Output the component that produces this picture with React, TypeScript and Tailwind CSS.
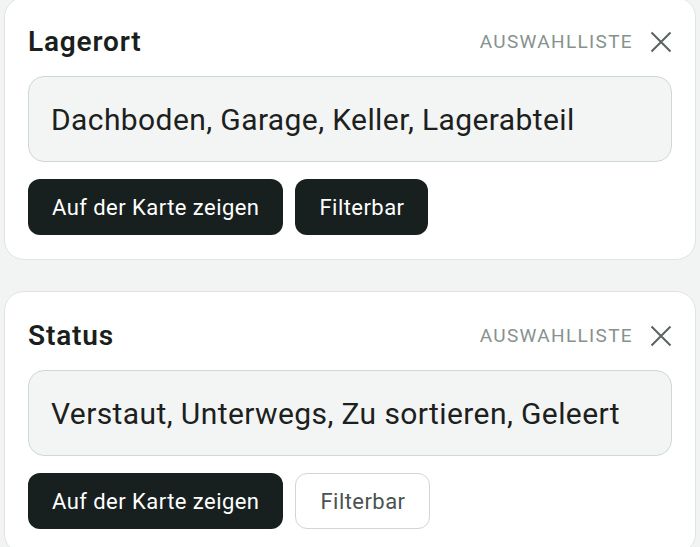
type Field = {
  title: string;
  values: string[];
  filterable: boolean;
};

const FIELDS: Field[] = [
  {
    title: "Lagerort",
    values: ["Dachboden", "Garage", "Keller", "Lagerabteil"],
    filterable: true,
  },
  {
    title: "Status",
    values: ["Verstaut", "Unterwegs", "Zu sortieren", "Geleert"],
    filterable: false,
  },
];

function CloseIcon() {
  return (
    <svg
      width="22"
      height="22"
      viewBox="0 0 22 22"
      fill="none"
      stroke="currentColor"
      strokeWidth="2"
      className="text-[#5a6360]"
    >
      <path d="M1.5 1.5l19 19M20.5 1.5l-19 19" />
    </svg>
  );
}

function FieldCard({ field }: { field: Field }) {
  return (
    <div className="rounded-[20px] border border-[#dfe4e2] bg-white px-[23px] pt-[26px] pb-6">
      <div className="flex h-9 items-center justify-between">
        <h2 className="text-[28px] leading-9 font-semibold tracking-[0.03em] text-[#1a1f1e]">
          {field.title}
        </h2>
        <div className="flex items-center gap-[17px]">
          <span className="text-[19px] tracking-[0.07em] text-[#87928e] uppercase">
            Auswahlliste
          </span>
          <CloseIcon />
        </div>
      </div>

      <div className="mt-4 flex h-[86px] items-center rounded-[16px] border-[1.5px] border-[#cfd8d5] bg-[#f3f5f4] pl-[22px]">
        <span className="text-[30px] tracking-[0.4px] text-[#1c2120]">
          {field.values.join(", ")}
        </span>
      </div>

      <div className="mt-[17px] flex gap-3">
        <button
          type="button"
          className="h-14 rounded-[12px] bg-[#18201f] px-6 text-[22px] tracking-[0.45px] text-white"
        >
          Auf der Karte zeigen
        </button>
        <button
          type="button"
          className={
            field.filterable
              ? "h-14 rounded-[12px] bg-[#18201f] px-6 text-[22px] tracking-[0.45px] text-white"
              : "h-14 rounded-[12px] border-[1.5px] border-[#cfd6d3] bg-white px-6 text-[22px] tracking-[0.45px] text-[#4a5351]"
          }
        >
          Filterbar
        </button>
      </div>
    </div>
  );
}

export default function App() {
  return (
    <div
      className="h-[547px] overflow-hidden bg-[#f2f4f3] px-1"
      style={{ fontFamily: "Roboto, 'Noto Sans', sans-serif" }}
    >
      <div className="-mt-[3px] flex flex-col gap-[31px]">
        {FIELDS.map((f) => (
          <FieldCard key={f.title} field={f} />
        ))}
      </div>
    </div>
  );
}
